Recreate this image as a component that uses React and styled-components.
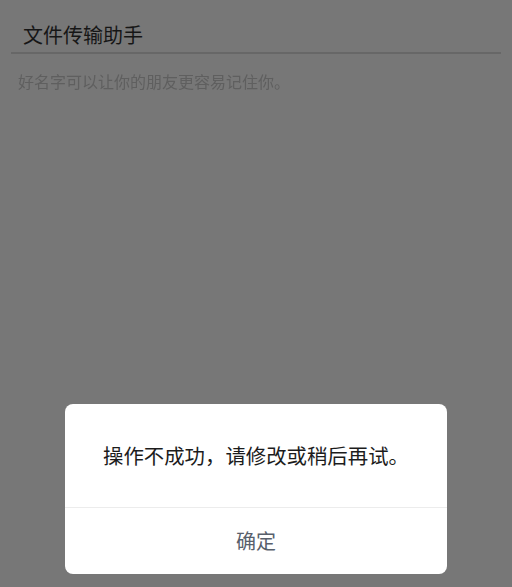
import React from "react";
import styled, { createGlobalStyle } from "styled-components";

const Global = createGlobalStyle`
  html, body { margin: 0; padding: 0; background: #777777; }
  body { font-family: "Noto Sans CJK SC", "Noto Sans", sans-serif; }
  #root { min-height: 587px; }
`;

const Page = styled.div`
  width: 512px;
  height: 587px;
  background: #777777;
  position: relative;
  overflow: hidden;
`;

const Field = styled.div`
  margin: 0 11px;
  padding: 20px 0 0 12px;
  height: 32px;
  border-bottom: 2px solid #676767;
  display: flex;
  align-items: flex-start;
`;

const Title = styled.div`
  font-size: 20px;
  line-height: 32px;
  margin-top: -1px;
  color: #161616;
`;

const Hint = styled.div`
  margin: 16px 0 0 18px;
  font-size: 16px;
  line-height: 22px;
  color: #5f5f5f;
  filter: blur(0.6px);
`;

const Dialog = styled.div`
  position: absolute;
  left: 65px;
  top: 404px;
  width: 382px;
  height: 170px;
  background: #ffffff;
  border-radius: 8px;
  display: flex;
  flex-direction: column;
  overflow: hidden;
`;

const Message = styled.div`
  height: 104px;
  display: flex;
  align-items: center;
  justify-content: center;
  font-size: 20.4px;
  color: #1c1c1c;
  border-bottom: 1px solid #ececec;
  box-sizing: border-box;
  padding-bottom: 2px;
`;

const Button = styled.div`
  flex: 1;
  display: flex;
  align-items: center;
  justify-content: center;
  font-size: 20px;
  color: #58606c;
  padding-bottom: 1px;
`;

export default function App() {
  return (
    <Page>
      <Global />
      <Field>
        <Title>文件传输助手</Title>
      </Field>
      <Hint>好名字可以让你的朋友更容易记住你。</Hint>
      <Dialog>
        <Message>操作不成功，请修改或稍后再试。</Message>
        <Button>确定</Button>
      </Dialog>
    </Page>
  );
}
